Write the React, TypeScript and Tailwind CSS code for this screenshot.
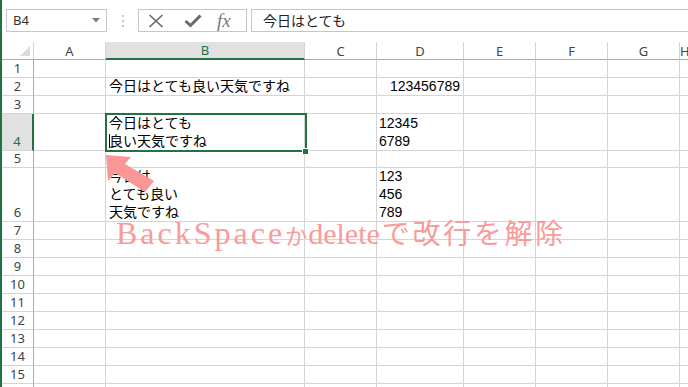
import React from "react";

const COLS = ["A", "B", "C", "D", "E", "F", "G", "H"];
const ROWS = [1, 2, 3, 4, 5, 6, 7, 8, 9, 10, 11, 12, 13, 14, 15, 16];

function bContent(r: number) {
  if (r === 2) return <div>今日はとても良い天気ですね</div>;
  if (r === 4)
    return (
      <div>
        <div>今日はとても</div>
        <div>
          <span className="inline-block w-[1px] h-[14px] bg-black mr-[-1px] align-[-2px]" />
          良い天気ですね
        </div>
      </div>
    );
  if (r === 6)
    return (
      <div>
        <div>今日は</div>
        <div>とても良い</div>
        <div>天気ですね</div>
      </div>
    );
  return null;
}

function dContent(r: number) {
  if (r === 4)
    return (
      <div>
        <div>12345</div>
        <div>6789</div>
      </div>
    );
  if (r === 6)
    return (
      <div>
        <div>123</div>
        <div>456</div>
        <div>789</div>
      </div>
    );
  return null;
}

export default function App() {
  return (
    <div className="relative w-[688px] h-[387px] overflow-hidden bg-white flex font-['Liberation_Sans','Noto_Sans_CJK_JP',sans-serif]">
      <div className="w-[2px] h-full bg-[#217346] shrink-0" />
      <div className="flex-1 flex flex-col">
        {/* Toolbar */}
        <div className="h-[42px] shrink-0 flex items-start pt-[9px] pl-[4px]">
          <div className="w-[101px] h-[23px] border border-[#c6c6c6] flex items-center justify-between pl-[6px] pr-[6px] text-[13px] text-[#333] font-['Noto_Sans',sans-serif]">
            <span>B4</span>
            <svg width="8" height="5" viewBox="0 0 8 5">
              <path d="M0 0 L8 0 L4 4.5 Z" fill="#7a7a7a" />
            </svg>
          </div>
          <div className="w-[31px] h-[23px] flex flex-col items-center justify-center gap-[3px]">
            <div className="w-[2px] h-[2px] bg-[#c4c4c4]" />
            <div className="w-[2px] h-[2px] bg-[#c4c4c4]" />
            <div className="w-[2px] h-[2px] bg-[#c4c4c4]" />
          </div>
          <div className="w-[109px] h-[23px] border border-[#c6c6c6] flex items-center pl-[9px]">
            <svg width="16" height="14" viewBox="0 0 16 14" className="shrink-0">
              <path d="M1.5 1 L14.5 13 M14.5 1 L1.5 13" stroke="#6a6a6a" strokeWidth="1.7" fill="none" />
            </svg>
            <svg width="18" height="14" viewBox="0 0 18 14" className="ml-[20px] shrink-0">
              <path d="M1.5 7 L6.5 11.5 L16.5 1.5" stroke="#6a6a6a" strokeWidth="3" fill="none" strokeLinejoin="miter" />
            </svg>
            <span className="ml-[15px] text-[19px] leading-[19px] italic text-[#7a7a7a] font-['Liberation_Serif',serif]">fx</span>
          </div>
          <div className="ml-[4px] flex-1 h-[23px] border border-r-0 border-[#c6c6c6] flex items-center pl-[11px] text-[14px] text-[#222] font-['Noto_Sans_CJK_JP',sans-serif]">
            今日はとても
          </div>
        </div>

        {/* Grid */}
        <div className="grid grid-cols-[32px_72px_199px_72px_87px_72px_72px_72px_1fr] grid-rows-[18px_18px_18px_18px_37px_17px_54px_18px_18px_18px_18px_18px_18px_18px_18px_18px_18px] text-[14px] leading-[18px] text-black">
          {/* header row */}
          <div className="relative border-b border-r border-b-[#ababab] border-r-[#d4d4d4]">
            <svg width="10" height="10" viewBox="0 0 10 10" className="absolute right-[3px] bottom-[3px]">
              <path d="M10 0 L10 10 L0 10 Z" fill="#dcdcdc" />
            </svg>
          </div>
          {COLS.map((c) =>
            c === "B" ? (
              <div
                key={c}
                className="flex items-center justify-center bg-[#e1e1e1] border-r border-r-[#d4d4d4] border-b-2 border-b-[#217346] text-[#217346] text-[13px] font-['Noto_Sans',sans-serif]"
              >
                {c}
              </div>
            ) : (
              <div
                key={c}
                className="flex items-center justify-center border-r border-b border-r-[#d4d4d4] border-b-[#ababab] text-[#444] text-[13px] font-['Noto_Sans',sans-serif]"
              >
                {c}
              </div>
            )
          )}
          {ROWS.map((r) => (
            <React.Fragment key={r}>
              {r === 4 ? (
                <div className="flex items-end justify-center bg-[#e1e1e1] border-b border-b-[#d4d4d4] border-r-2 border-r-[#217346] text-[#217346] text-[13px] leading-[17px] font-['Noto_Sans',sans-serif]">
                  {r}
                </div>
              ) : (
                <div className="flex items-end justify-center border-b border-r border-b-[#d4d4d4] border-r-[#ababab] text-[#444] text-[13px] leading-[17px] font-['Noto_Sans',sans-serif]">
                  {r}
                </div>
              )}
              {COLS.map((c) => {
                if (c === "B")
                  return (
                    <div key={c} className="flex items-end pl-[3px] border-r border-b border-[#d4d4d4] whitespace-nowrap">
                      {bContent(r)}
                    </div>
                  );
                if (c === "D")
                  return r === 2 ? (
                    <div key={c} className="flex items-end justify-end pr-[3px] border-r border-b border-[#d4d4d4]">
                      123456789
                    </div>
                  ) : (
                    <div key={c} className="flex items-end pl-[2px] border-r border-b border-[#d4d4d4]">
                      {dContent(r)}
                    </div>
                  );
                return <div key={c} className="border-r border-b border-[#d4d4d4]" />;
              })}
            </React.Fragment>
          ))}
        </div>
      </div>

      {/* Selected cell border */}
      <div className="absolute left-[105px] top-[113px] w-[202px] h-[39px] border-2 border-[#217346]" />
      <div className="absolute left-[302px] top-[148px] w-[7px] h-[7px] bg-[#217346] border border-white" />

      {/* Arrow */}
      <svg className="absolute left-0 top-0" width="688" height="387" viewBox="0 0 688 387">
        <polygon
          points="106,155 131,157 125,164 154,181 145,192 115,173 108,181"
          fill="#fa9696"
        />
      </svg>

      {/* Annotation */}
      <div className="absolute left-[116px] top-[217px] flex items-baseline h-[32px] text-[#fa9a9a] whitespace-nowrap">
        <span className="text-[32px] leading-[30px] tracking-[3px] font-['Liberation_Serif',serif]">BackSpace</span>
        <span className="text-[22px] leading-[30px] ml-[0px] mr-[1px] font-['Noto_Sans_CJK_JP',sans-serif]">か</span>
        <span className="text-[30px] leading-[30px] font-['Liberation_Serif',serif]">delete</span>
        <span className="text-[28px] leading-[30px] tracking-[2.7px] ml-[2px] font-['Noto_Sans_CJK_JP',sans-serif]">で改行を解除</span>
      </div>
    </div>
  );
}
